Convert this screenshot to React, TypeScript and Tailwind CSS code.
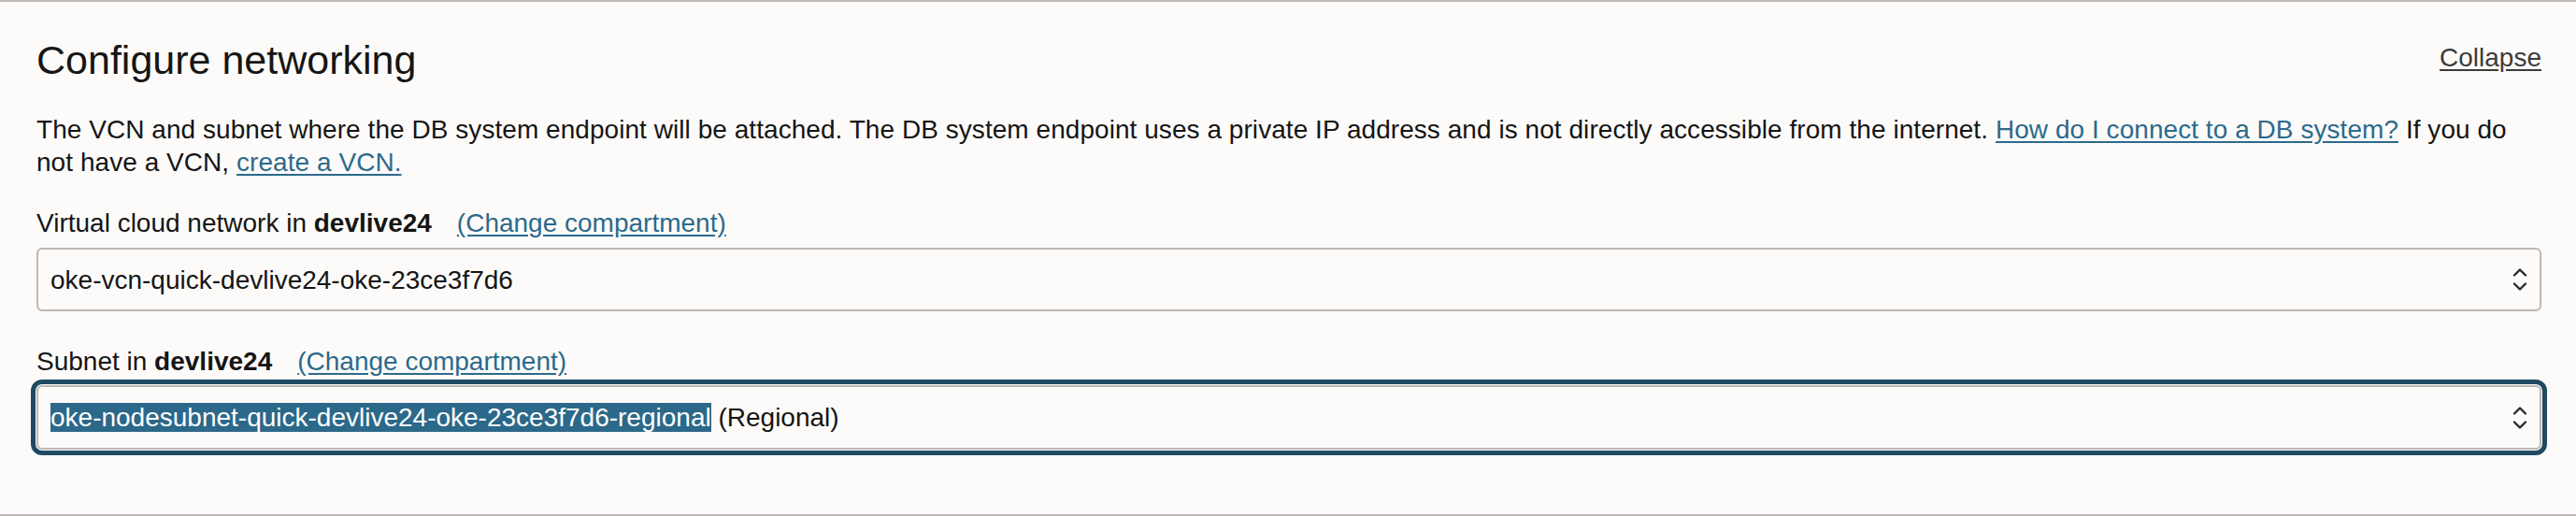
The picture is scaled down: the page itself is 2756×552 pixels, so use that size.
import { useState } from "react";

function Chevrons() {
  return (
    <svg width="16" height="26" viewBox="0 0 16 26" fill="none" className="shrink-0">
      <polyline points="2,8.5 8,2.5 14,8.5" stroke="#2a2927" strokeWidth="2.4" strokeLinecap="round" strokeLinejoin="round" />
      <polyline points="2,17.5 8,23.5 14,17.5" stroke="#2a2927" strokeWidth="2.4" strokeLinecap="round" strokeLinejoin="round" />
    </svg>
  );
}

function FieldLabel({ prefix, compartment }: { prefix: string; compartment: string }) {
  return (
    <div className="flex items-baseline gap-[27px] leading-[35px]">
      <span>
        {prefix} <span className="font-bold">{compartment}</span>
      </span>
      <a href="#" className="text-[#2c6a8c] underline underline-offset-[3px]">
        (Change compartment)
      </a>
    </div>
  );
}

export default function App() {
  const [open, setOpen] = useState(true);

  return (
    <section className="h-[552px] bg-[#fcfbfa] border-y-2 border-[#c0bbb5] font-['Liberation_Sans',Arial,sans-serif] text-[28px] text-[#161513]">
      <div className="pl-[39px] pr-[37px] pt-[36px]">
        {/* Header */}
        <div className="flex items-start justify-between">
          <h2 className="text-[43px] leading-[52px] font-normal">Configure networking</h2>
          <button
            onClick={() => setOpen(!open)}
            className="mt-[7px] leading-[34px] text-[#3d3c3a] underline underline-offset-[3px]"
          >
            Collapse
          </button>
        </div>

        {/* Description */}
        <p className="mt-[31px] leading-[35px] tracking-[0.05px]">
          <span>
            The VCN and subnet where the DB system endpoint will be attached. The DB system endpoint uses a private IP
            address and is not directly accessible from the internet.
          </span>{" "}
          <a href="#" className="text-[#2c6a8c] underline underline-offset-[3px]">
            How do I connect to a DB system?
          </a>{" "}
          <span>If you do</span>
          <br />
          <span>not have a VCN,</span>{" "}
          <a href="#" className="text-[#2c6a8c] underline underline-offset-[3px]">
            create a VCN.
          </a>
        </p>

        {/* VCN */}
        <div className="mt-[30px]">
          <FieldLabel prefix="Virtual cloud network in" compartment="devlive24" />
          <div className="mt-[9px] h-[68px] flex items-center justify-between rounded-md border-2 border-[#bdb8b2] pl-[13px] pr-[13px]">
            <span className="leading-[33px]">oke-vcn-quick-devlive24-oke-23ce3f7d6</span>
            <Chevrons />
          </div>
        </div>

        {/* Subnet */}
        <div className="mt-[36px]">
          <FieldLabel prefix="Subnet in" compartment="devlive24" />
          <div className="mt-[8px] h-[69px] flex items-center justify-between rounded-md border-2 border-[#bdb8b2] outline-[5px] outline-solid outline-offset-1 outline-[#1f4a62] pl-[13px] pr-[13px]">
            <span className="leading-[33px]">
              <span className="bg-[#2c6889] text-white">oke-nodesubnet-quick-devlive24-oke-23ce3f7d6-regional</span> (Regional)
            </span>
            <Chevrons />
          </div>
        </div>
      </div>
    </section>
  );
}
